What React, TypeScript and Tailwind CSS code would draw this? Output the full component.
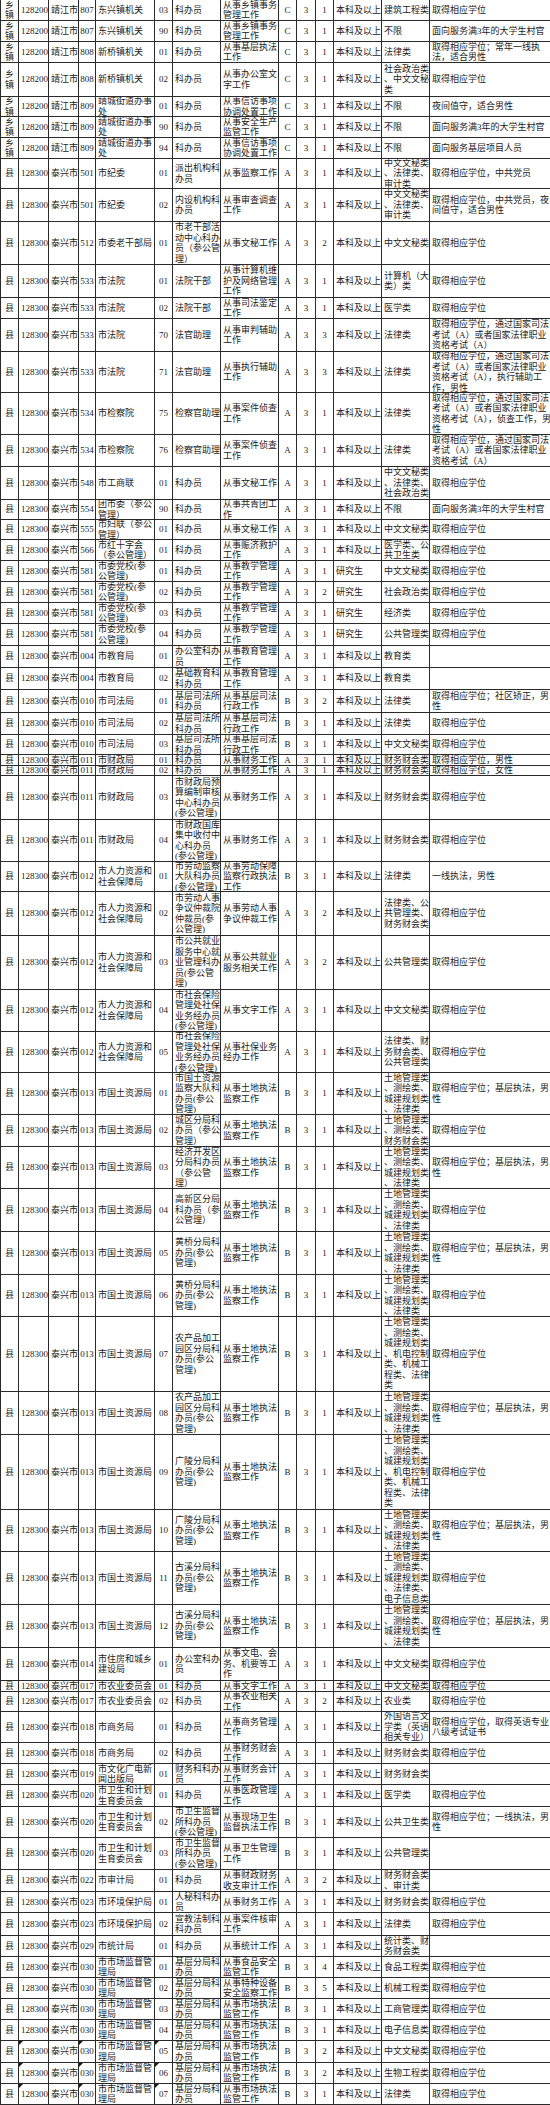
import React from 'react';

type Row = { h: string; c: string[]; mark?: boolean };

// column order: 层级 代码 地区 部门代码 部门 职位代码 职位 职位描述 类别 3 人数 学历 专业 备注
const grid =
  'grid grid-cols-[18px_30px_30px_17px_59px_18px_48px_58px_18px_19px_18px_48px_48px_121px]';

const centered = [0, 3, 5, 8, 9, 10];

const jj = (dc: string, dept: string) => ['乡|镇', '128200', '靖江市', dc, dept];
const tx = (dc: string, dept: string) => ['县', '128300', '泰兴市', dc, dept];

const LAW = '取得相应学位，通过国家司法|考试（A）或者国家法律职业|资格考试（A）';
const LAND4 = '土地管理类|、测绘类、|城建规划类|、法律类';
const LAND7 = '土地管理类|、测绘类、|城建规划类|、机电控制|类、机械工|程类、法律|类';
const BASE = '取得相应学位；基层执法，男|性';
const HR = '市人力资源和|社会保障局';
const LR = '市国土资源局';
const LAND_JOB = '从事土地执法|监察工作';
const SCM = '市市场监督管|理局';

const rows: Row[] = [
  { h: 'h-[21px]', c: [...jj('807', '东兴镇机关'), '03', '科办员', '从事乡镇事务|管理工作', 'C', '3', '1', '本科及以上', '建筑工程类', '取得相应学位'] },
  { h: 'h-[21px]', c: [...jj('807', '东兴镇机关'), '90', '科办员', '从事乡镇事务|管理工作', 'C', '3', '1', '本科及以上', '不限', '面向服务满3年的大学生村官'] },
  { h: 'h-[21px]', c: [...jj('808', '新桥镇机关'), '01', '科办员', '从事基层执法|工作', 'C', '3', '1', '本科及以上', '法律类', '取得相应学位；常年一线执|法，适合男性'] },
  { h: 'h-[34px]', c: [...jj('808', '新桥镇机关'), '02', '科办员', '从事办公室文|字工作', 'C', '3', '1', '本科及以上', '社会政治类|、中文文秘|类', '取得相应学位'] },
  { h: 'h-[20px]', c: [...jj('809', '靖城街道办事|处'), '01', '科办员', '从事信访事项|协调处置工作', 'C', '3', '1', '本科及以上', '不限', '夜间值守，适合男性'] },
  { h: 'h-[21px]', c: [...jj('809', '靖城街道办事|处'), '90', '科办员', '从事安全生产|监管工作', 'C', '3', '1', '本科及以上', '不限', '面向服务满3年的大学生村官'] },
  { h: 'h-[21px]', c: [...jj('809', '靖城街道办事|处'), '94', '科办员', '从事信访事项|协调处置工作', 'C', '3', '1', '本科及以上', '不限', '面向服务基层项目人员'] },
  { h: 'h-[30px]', c: [...tx('501', '市纪委'), '01', '派出机构科|办员', '从事监察工作', 'A', '3', '1', '本科及以上', '中文文秘类|、法律类、|审计类', '取得相应学位，中共党员'] },
  { h: 'h-[33px]', c: [...tx('501', '市纪委'), '02', '内设机构科|办员', '从事审查调查|工作', 'A', '3', '1', '本科及以上', '中文文秘类|、法律类、|审计类', '取得相应学位，中共党员，夜|间值守，适合男性'] },
  { h: 'h-[43px]', c: [...tx('512', '市委老干部局'), '01', '市老干部活|动中心科办|员（参公管|理）', '从事文秘工作', 'A', '3', '2', '本科及以上', '中文文秘类', '取得相应学位'] },
  { h: 'h-[33px]', c: [...tx('533', '市法院'), '01', '法院干部', '从事计算机维|护及网络管理|工作', 'A', '3', '1', '本科及以上', '计算机（大|类）类', '取得相应学位'] },
  { h: 'h-[21px]', c: [...tx('533', '市法院'), '02', '法院干部', '从事司法鉴定|工作', 'A', '3', '1', '本科及以上', '医学类', '取得相应学位'] },
  { h: 'h-[33px]', c: [...tx('533', '市法院'), '70', '法官助理', '从事审判辅助|工作', 'A', '3', '3', '本科及以上', '法律类', LAW] },
  { h: 'h-[41px]', c: [...tx('533', '市法院'), '71', '法官助理', '从事执行辅助|工作', 'A', '3', '3', '本科及以上', '法律类', '取得相应学位，通过国家司法|考试（A）或者国家法律职业|资格考试（A），执行辅助工|作，男性'] },
  { h: 'h-[42px]', c: [...tx('534', '市检察院'), '75', '检察官助理', '从事案件侦查|工作', 'A', '3', '1', '本科及以上', '法律类', '取得相应学位，通过国家司法|考试（A）或者国家法律职业|资格考试（A），侦查工作，男|性'] },
  { h: 'h-[32px]', c: [...tx('534', '市检察院'), '76', '检察官助理', '从事案件侦查|工作', 'A', '3', '1', '本科及以上', '法律类', LAW] },
  { h: 'h-[33px]', c: [...tx('548', '市工商联'), '01', '科办员', '从事文秘工作', 'A', '3', '1', '本科及以上', '中文文秘类|、法律类、|社会政治类', '取得相应学位'] },
  { h: 'h-[20px]', c: [...tx('554', '团市委（参公|管理）'), '90', '科办员', '从事共青团工|作', 'A', '3', '1', '本科及以上', '不限', '面向服务满3年的大学生村官'] },
  { h: 'h-[20px]', c: [...tx('555', '市妇联（参公|管理）'), '01', '科办员', '从事文秘工作', 'A', '3', '1', '本科及以上', '中文文秘类', '取得相应学位'] },
  { h: 'h-[21px]', c: [...tx('566', '市红十字会|（参公管理）'), '01', '科办员', '从事赈济救护|工作', 'A', '3', '1', '本科及以上', '医学类、公|共卫生类', '取得相应学位'] },
  { h: 'h-[21px]', c: [...tx('581', '市委党校(参|公管理)'), '01', '科办员', '从事教学管理|工作', 'A', '3', '1', '研究生', '中文文秘类', '取得相应学位'] },
  { h: 'h-[21px]', c: [...tx('581', '市委党校(参|公管理)'), '02', '科办员', '从事教学管理|工作', 'A', '3', '2', '研究生', '社会政治类', '取得相应学位'] },
  { h: 'h-[21px]', c: [...tx('581', '市委党校(参|公管理)'), '03', '科办员', '从事教学管理|工作', 'A', '3', '1', '研究生', '经济类', '取得相应学位'] },
  { h: 'h-[22px]', c: [...tx('581', '市委党校(参|公管理)'), '04', '科办员', '从事教学管理|工作', 'A', '3', '1', '研究生', '公共管理类', '取得相应学位'] },
  { h: 'h-[22px]', c: [...tx('004', '市教育局'), '01', '办公室科办|员', '从事教育管理|工作', 'A', '3', '1', '本科及以上', '教育类', ''] },
  { h: 'h-[22px]', c: [...tx('004', '市教育局'), '02', '基础教育科|科办员', '从事教育管理|工作', 'A', '3', '1', '本科及以上', '教育类', ''] },
  { h: 'h-[23px]', c: [...tx('010', '市司法局'), '01', '基层司法所|科办员', '从事基层司法|行政工作', 'B', '3', '2', '本科及以上', '法律类', '取得相应学位；社区矫正，男|性'] },
  { h: 'h-[22px]', c: [...tx('010', '市司法局'), '02', '基层司法所|科办员', '从事基层司法|行政工作', 'B', '3', '1', '本科及以上', '法律类', '取得相应学位'] },
  { h: 'h-[20px]', c: [...tx('010', '市司法局'), '03', '基层司法所|科办员', '从事基层司法|行政工作', 'B', '3', '1', '本科及以上', '中文文秘类', '取得相应学位'] },
  { h: 'h-[11px]', c: [...tx('011', '市财政局'), '01', '科办员', '从事财务工作', 'A', '3', '1', '本科及以上', '财务财会类', '取得相应学位，男性'] },
  { h: 'h-[10px]', c: [...tx('011', '市财政局'), '02', '科办员', '从事财务工作', 'A', '3', '1', '本科及以上', '财务财会类', '取得相应学位，女性'] },
  { h: 'h-[44px]', c: [...tx('011', '市财政局'), '03', '市财政局预|算编制审核|中心科办员|(参公管理)', '从事财务工作', 'A', '3', '1', '本科及以上', '财务财会类', '取得相应学位'] },
  { h: 'h-[42px]', c: [...tx('011', '市财政局'), '04', '市财政国库|集中收付中|心科办员|(参公管理)', '从事财务工作', 'A', '3', '1', '本科及以上', '财务财会类', '取得相应学位'] },
  { h: 'h-[30px]', c: [...tx('012', HR), '01', '市劳动监察|大队科办员|(参公管理)', '从事劳动保障|监察行政执法|工作', 'B', '3', '1', '本科及以上', '法律类', '一线执法，男性'] },
  { h: 'h-[44px]', c: [...tx('012', HR), '02', '市劳动人事|争议仲裁院|仲裁员(参|公管理)', '从事劳动人事|争议仲裁工作', 'A', '3', '2', '本科及以上', '法律类、公|共管理类、|财务财会类', '取得相应学位'] },
  { h: 'h-[54px]', c: [...tx('012', HR), '03', '市公共就业|服务中心就|业管理科办|员(参公管|理)', '从事公共就业|服务相关工作', 'A', '3', '2', '本科及以上', '公共管理类', '取得相应学位'] },
  { h: 'h-[42px]', c: [...tx('012', HR), '04', '市社会保险|管理处社保|业务经办员|(参公管理)', '从事文字工作', 'A', '3', '1', '本科及以上', '中文文秘类', '取得相应学位'] },
  { h: 'h-[41px]', c: [...tx('012', HR), '05', '市社会保险|管理处社保|业务经办员|(参公管理)', '从事社保业务|经办工作', 'A', '3', '1', '本科及以上', '法律类、财|务财会类、|公共管理类', '取得相应学位'] },
  { h: 'h-[42px]', c: [...tx('013', LR), '01', '市国土资源|监察大队科|办员(参公|管理)', LAND_JOB, 'B', '3', '1', '本科及以上', LAND4, BASE] },
  { h: 'h-[32px]', c: [...tx('013', LR), '02', '城区分局科|办员（参公|管理）', LAND_JOB, 'B', '3', '1', '本科及以上', '土地管理类|、测绘类、|财务财会类', '取得相应学位'] },
  { h: 'h-[42px]', c: [...tx('013', LR), '03', '经济开发区|分局科办员|（参公管|理）', LAND_JOB, 'B', '3', '1', '本科及以上', LAND4, BASE] },
  { h: 'h-[43px]', c: [...tx('013', LR), '04', '高新区分局|科办员（参|公管理）', LAND_JOB, 'B', '3', '1', '本科及以上', LAND4, '取得相应学位'] },
  { h: 'h-[43px]', c: [...tx('013', LR), '05', '黄桥分局科|办员(参公|管理)', LAND_JOB, 'B', '3', '1', '本科及以上', LAND4, BASE] },
  { h: 'h-[42px]', c: [...tx('013', LR), '06', '黄桥分局科|办员(参公|管理)', LAND_JOB, 'B', '3', '1', '本科及以上', LAND4, '取得相应学位'] },
  { h: 'h-[75px]', c: [...tx('013', LR), '07', '农产品加工|园区分局科|办员(参公|管理)', LAND_JOB, 'B', '3', '1', '本科及以上', LAND7, '取得相应学位'] },
  { h: 'h-[43px]', c: [...tx('013', LR), '08', '农产品加工|园区分局科|办员(参公|管理)', LAND_JOB, 'B', '3', '1', '本科及以上', LAND4, BASE] },
  { h: 'h-[75px]', c: [...tx('013', LR), '09', '广陵分局科|办员(参公|管理)', LAND_JOB, 'B', '3', '1', '本科及以上', LAND7, '取得相应学位'] },
  { h: 'h-[42px]', c: [...tx('013', LR), '10', '广陵分局科|办员(参公|管理)', LAND_JOB, 'B', '3', '1', '本科及以上', LAND4, BASE] },
  { h: 'h-[53px]', c: [...tx('013', LR), '11', '古溪分局科|办员(参公|管理)', LAND_JOB, 'B', '3', '1', '本科及以上', '土地管理类|、测绘类、|城建规划类|、法律类、|电子信息类', '取得相应学位'] },
  { h: 'h-[43px]', c: [...tx('013', LR), '12', '古溪分局科|办员(参公|管理)', LAND_JOB, 'B', '3', '1', '本科及以上', LAND4, BASE] },
  { h: 'h-[33px]', c: [...tx('014', '市住房和城乡|建设局'), '01', '办公室科办|员', '从事文电、会|务、机要等工|作', 'A', '3', '1', '本科及以上', '中文文秘类', '取得相应学位'] },
  { h: 'h-[11px]', c: [...tx('017', '市农业委员会'), '01', '科办员', '从事文字工作', 'A', '3', '1', '本科及以上', '中文文秘类', '取得相应学位'] },
  { h: 'h-[20px]', c: [...tx('017', '市农业委员会'), '02', '科办员', '从事农业相关|工作', 'A', '3', '2', '本科及以上', '农业类', '取得相应学位'] },
  { h: 'h-[31px]', c: [...tx('018', '市商务局'), '01', '科办员', '从事商务管理|工作', 'A', '3', '1', '本科及以上', '外国语言文|学类（英语|相关专业）', '取得相应学位，取得英语专业|八级考试证书'] },
  { h: 'h-[21px]', c: [...tx('018', '市商务局'), '02', '科办员', '从事财务财会|工作', 'A', '3', '1', '本科及以上', '财务财会类', '取得相应学位'] },
  { h: 'h-[21px]', c: [...tx('019', '市文化广电新|闻出版局'), '01', '财务科科办|员', '从事财务会计|工作', 'A', '3', '1', '本科及以上', '财务财会类', ''] },
  { h: 'h-[22px]', c: [...tx('020', '市卫生和计划|生育委员会'), '01', '科办员', '从事医政管理|工作', 'A', '3', '1', '本科及以上', '医学类', '取得相应学位'] },
  { h: 'h-[31px]', c: [...tx('020', '市卫生和计划|生育委员会'), '02', '市卫生监督|所科办员|(参公管理)', '从事现场卫生|监督执法工作', 'B', '3', '1', '本科及以上', '公共卫生类', '取得相应学位；一线执法，男|性'] },
  { h: 'h-[32px]', c: [...tx('020', '市卫生和计划|生育委员会'), '03', '市卫生监督|所科办员|(参公管理)', '从事卫生管理|工作', 'B', '3', '1', '本科及以上', '公共管理类', ''] },
  { h: 'h-[22px]', c: [...tx('022', '市审计局'), '01', '科办员', '从事财政财务|收支审计工作', 'A', '3', '2', '本科及以上', '财务财会类|、审计类', ''] },
  { h: 'h-[21px]', c: [...tx('023', '市环境保护局'), '01', '人秘科科办|员', '从事财务工作', 'A', '3', '1', '本科及以上', '财务财会类', '取得相应学位'] },
  { h: 'h-[23px]', c: [...tx('023', '市环境保护局'), '02', '宣教法制科|科办员', '从事案件核审|工作', 'A', '3', '1', '本科及以上', '法律类', '取得相应学位'] },
  { h: 'h-[21px]', c: [...tx('029', '市统计局'), '01', '科办员', '从事统计工作', 'A', '3', '1', '本科及以上', '统计类、财|务财会类', ''] },
  { h: 'h-[21px]', c: [...tx('030', SCM), '01', '基层分局科|办员', '从事食品安全|监管工作', 'B', '3', '4', '本科及以上', '食品工程类', '取得相应学位'] },
  { h: 'h-[21px]', c: [...tx('030', SCM), '02', '基层分局科|办员', '从事特种设备|安全监察工作', 'B', '3', '5', '本科及以上', '机械工程类', '取得相应学位'] },
  { h: 'h-[21px]', c: [...tx('030', SCM), '03', '基层分局科|办员', '从事市场执法|监管工作', 'B', '3', '1', '本科及以上', '工商管理类', '取得相应学位'] },
  { h: 'h-[21px]', c: [...tx('030', SCM), '04', '基层分局科|办员', '从事市场执法|监管工作', 'B', '3', '1', '本科及以上', '电子信息类', '取得相应学位'] },
  { h: 'h-[22px]', mark: true, c: [...tx('030', SCM), '05', '基层分局科|办员', '从事市场执法|监管工作', 'B', '3', '2', '本科及以上', '中文文秘类', '取得相应学位'] },
  { h: 'h-[21px]', mark: true, c: [...tx('030', SCM), '06', '基层分局科|办员', '从事市场执法|监管工作', 'B', '3', '2', '本科及以上', '生物工程类', '取得相应学位'] },
  { h: 'h-[21px]', mark: true, c: [...tx('030', SCM), '07', '基层分局科|办员', '从事市场执法|监管工作', 'B', '3', '1', '本科及以上', '法律类', '取得相应学位'] },
];

function Cell({ text, col, mark }: { text: string; col: number; mark?: boolean }) {
  const center = centered.includes(col);
  return (
    <div
      className={`relative flex items-center overflow-hidden border-r border-[#2a2a2a] ${
        center ? 'justify-center text-center' : 'justify-start pl-[2px]'
      }`}
    >
      {mark && (col === 1 || col === 3 || col === 5) && (
        <span className="absolute left-0 top-0 h-0 w-0 border-t-[4px] border-r-[4px] border-t-[#1a1a1a] border-r-transparent" />
      )}
      <div>
        {text.split('|').map((line, i) => (
          <span key={i} className="block whitespace-nowrap">
            {line}
          </span>
        ))}
      </div>
    </div>
  );
}

export default function App() {
  return (
    <div className="w-[550px] bg-white text-[#1c1c1c] text-[9px] leading-[10.5px] font-['Liberation_Serif','Noto_Sans_CJK_SC',serif]">
      <div className="border-l border-[#2a2a2a]">
        {rows.map((row, r) => (
          <div key={r} className={`${grid} ${row.h} border-b border-[#2a2a2a]`}>
            {row.c.map((t, i) => (
              <Cell key={i} text={t} col={i} mark={row.mark} />
            ))}
          </div>
        ))}
      </div>
    </div>
  );
}
